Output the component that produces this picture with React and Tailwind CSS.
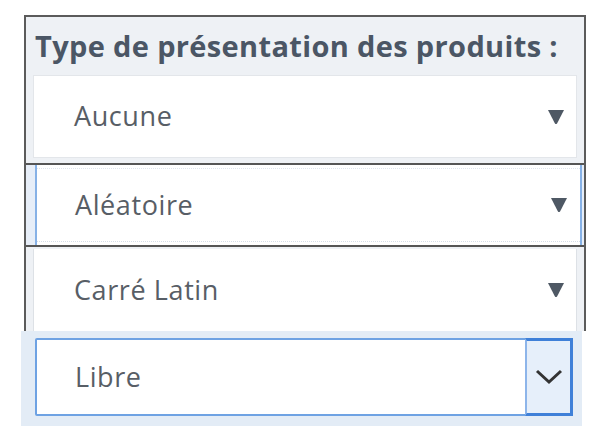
import React from "react";

const font = { fontFamily: '"Open Sans", "Liberation Sans", sans-serif' };

function Triangle() {
  return (
    <svg width="18" height="16" viewBox="0 0 18 16" className="shrink-0">
      <path d="M1 1 H17 L10.2 14.2 Q9 16 7.8 14.2 Z" fill="#4e5864" />
    </svg>
  );
}

function Chevron() {
  return (
    <svg width="28" height="16" viewBox="0 0 28 16">
      <polyline points="2,2 14,13 26,2" fill="none" stroke="#333" strokeWidth="3" />
    </svg>
  );
}

export default function App() {
  return (
    <div className="w-[592px] h-[436px] bg-white pt-[15px] text-[#585e66]" style={font}>
      {/* framed group */}
      <div className="ml-[24px] w-[562px] border-2 border-b-0 border-[#5b5b5b] bg-[#eef1f5]">
        <div className="h-[58px] pl-[9px] pb-[2px] flex items-center">
          <span className="text-[29px] font-bold text-[#4b5665] tracking-[0.35px] leading-none">
            Type de présentation des produits :
          </span>
        </div>

        <div className="px-[7px] pb-[5px]">
          <div className="h-[83px] bg-white border border-[#e3e6ea] flex items-center justify-between pl-[40px] pr-[11px]">
            <span className="text-[27px] tracking-[0.6px]">Aucune</span>
            <Triangle />
          </div>
        </div>

        <div className="border-t-2 border-[#555] bg-[#e7eef8] pl-[9px] pr-[2px]">
          <div className="h-[80px] bg-white border-x-2 border-[#86b1e6] flex flex-col">
            <div className="h-[4px] border-b border-dotted border-[#dfe5ee]" />
            <div className="flex-1 flex items-center justify-between pl-[38px] pr-[12px]">
              <span className="text-[27px] tracking-[0.6px]">Aléatoire</span>
              <Triangle />
            </div>
            <div className="h-[4px] border-t border-dotted border-[#d5dde8]" />
          </div>
        </div>

        <div className="border-t-2 border-[#555] px-[7px] pt-[2px]">
          <div className="h-[82px] bg-white border-x border-[#dde1e6] flex items-center justify-between pl-[40px] pr-[11px]">
            <span className="text-[27px] tracking-[0.6px]">Carré Latin</span>
            <Triangle />
          </div>
        </div>
      </div>

      {/* focused select */}
      <div className="ml-[21px] w-[561px] h-[95px] bg-[#e3ecf6] pl-[14px] pr-[9px] pt-[7px]">
        <div className="h-[78px] flex bg-white border-2 border-[#6ea2e3] rounded-[2px]">
          <div className="flex-1 flex items-center pl-[38px]">
            <span className="text-[27px] tracking-[0.6px]">Libre</span>
          </div>
          <div className="w-[48px] -my-[2px] -mr-[2px] bg-[#e6effa] border-[3px] border-[#3f80d8] border-l-2 border-l-[#8db5ea] flex items-center justify-center">
            <Chevron />
          </div>
        </div>
      </div>
    </div>
  );
}
